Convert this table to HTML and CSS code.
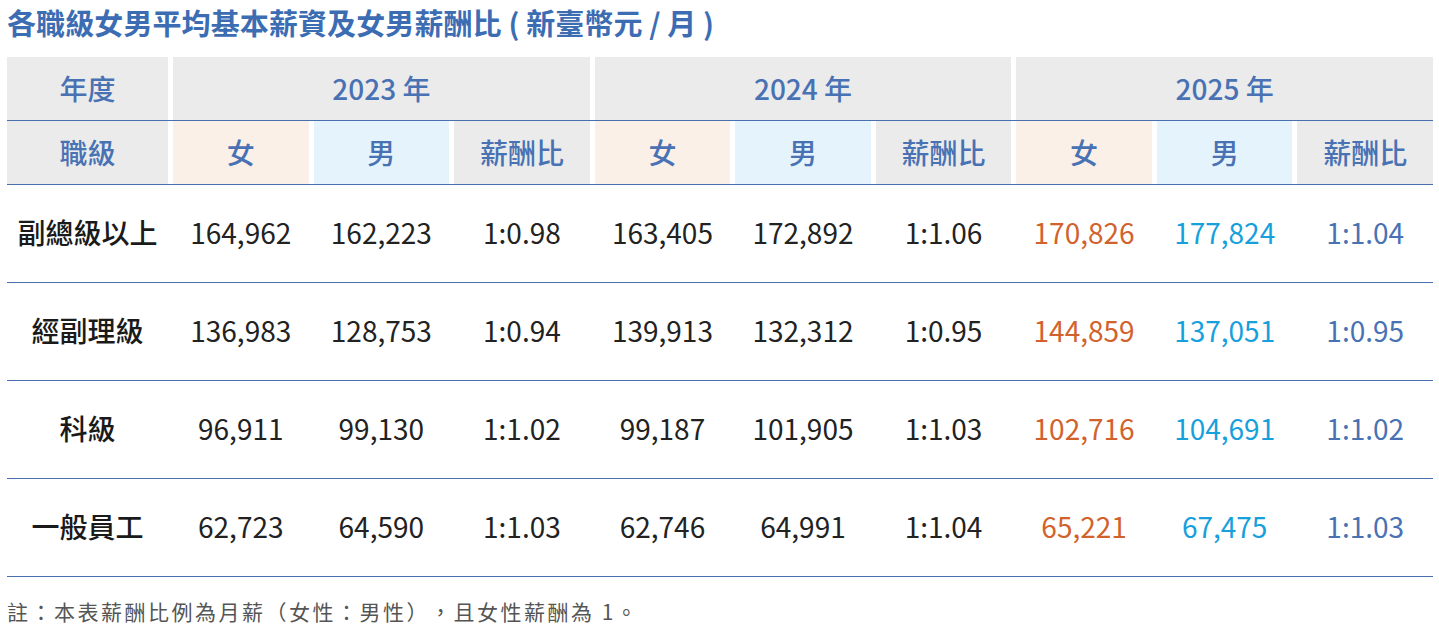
FILE: index.html
```html
<!DOCTYPE html>
<html lang="zh-Hant">
<head>
<meta charset="utf-8">
<title>各職級女男平均基本薪資及女男薪酬比</title>
<link rel="stylesheet" href="styles.css">
</head>
<body>
<div class="page">
  <h1 class="title">各職級女男平均基本薪資及女男薪酬比 ( 新臺幣元 / 月 )</h1>
  <div class="table">
    <div class="row head1">
      <div class="cell gray">年度</div>
      <div class="cell gray">2023 年</div>
      <div class="cell gray">2024 年</div>
      <div class="cell gray">2025 年</div>
    </div>
    <div class="row head2">
      <div class="cell gray">職級</div>
      <div class="cell peach">女</div>
      <div class="cell sky">男</div>
      <div class="cell gray">薪酬比</div>
      <div class="cell peach">女</div>
      <div class="cell sky">男</div>
      <div class="cell gray">薪酬比</div>
      <div class="cell peach">女</div>
      <div class="cell sky">男</div>
      <div class="cell gray">薪酬比</div>
    </div>
    <div class="row body">
      <div class="cell label">副總級以上</div>
      <div class="cell">164,962</div><div class="cell">162,223</div><div class="cell">1:0.98</div>
      <div class="cell">163,405</div><div class="cell">172,892</div><div class="cell">1:1.06</div>
      <div class="cell f">170,826</div><div class="cell m">177,824</div><div class="cell r">1:1.04</div>
    </div>
    <div class="row body">
      <div class="cell label">經副理級</div>
      <div class="cell">136,983</div><div class="cell">128,753</div><div class="cell">1:0.94</div>
      <div class="cell">139,913</div><div class="cell">132,312</div><div class="cell">1:0.95</div>
      <div class="cell f">144,859</div><div class="cell m">137,051</div><div class="cell r">1:0.95</div>
    </div>
    <div class="row body">
      <div class="cell label">科級</div>
      <div class="cell">96,911</div><div class="cell">99,130</div><div class="cell">1:1.02</div>
      <div class="cell">99,187</div><div class="cell">101,905</div><div class="cell">1:1.03</div>
      <div class="cell f">102,716</div><div class="cell m">104,691</div><div class="cell r">1:1.02</div>
    </div>
    <div class="row body">
      <div class="cell label">一般員工</div>
      <div class="cell">62,723</div><div class="cell">64,590</div><div class="cell">1:1.03</div>
      <div class="cell">62,746</div><div class="cell">64,991</div><div class="cell">1:1.04</div>
      <div class="cell f">65,221</div><div class="cell m">67,475</div><div class="cell r">1:1.03</div>
    </div>
  </div>
  <p class="note">註：本表薪酬比例為月薪（女性：男性），且女性薪酬為 1。</p>
</div>
</body>
</html>
```

FILE: styles.css
```css
* { box-sizing: border-box; }
html, body { margin: 0; padding: 0; background: #ffffff; }
body {
  font-family: "Noto Sans CJK TC", "Noto Sans", sans-serif;
  color: #222222;
  text-spacing-trim: space-all;
}
.page {
  width: 1439px;
  padding: 0 6px 0 7px;
}
.title {
  margin: 0;
  height: 48px;
  padding-top: 2px;
  font-size: 29px;
  line-height: 40px;
  font-weight: 700;
  color: #3c6db3;
  letter-spacing: 0.1px;
  white-space: nowrap;
}
.table {
  width: 1426px;
  margin-top: 9px;
}
.row {
  display: grid;
  grid-template-columns: 161px repeat(9, 1fr);
  column-gap: 5px;
  border-bottom: 1px solid #4a6fae;
}
.row.head1 {
  grid-template-columns: 161px repeat(3, 1fr);
}
.cell {
  display: flex;
  align-items: center;
  justify-content: center;
  white-space: nowrap;
}
.head1 .cell, .head2 .cell {
  height: 63px;
  padding-bottom: 2px;
  font-size: 28px;
  font-weight: 500;
  color: #4872b3;
}
.gray { background: #ebebeb; }
.peach { background: #fbf0e7; }
.sky { background: #e5f4fc; }
.body .cell {
  height: 97px;
  padding-bottom: 3px;
  font-size: 28px;
  font-weight: 400;
  color: #222222;
}
.body .cell.label {
  font-weight: 500;
  color: #1a1a1a;
}
.body .cell.f { color: #d2622c; }
.body .cell.m { color: #16a0dc; }
.body .cell.r { color: #4872b3; }
.note {
  margin: 20px 0 0;
  font-size: 21px;
  line-height: 28px;
  letter-spacing: 2.5px;
  color: #555555;
  white-space: nowrap;
}
```
